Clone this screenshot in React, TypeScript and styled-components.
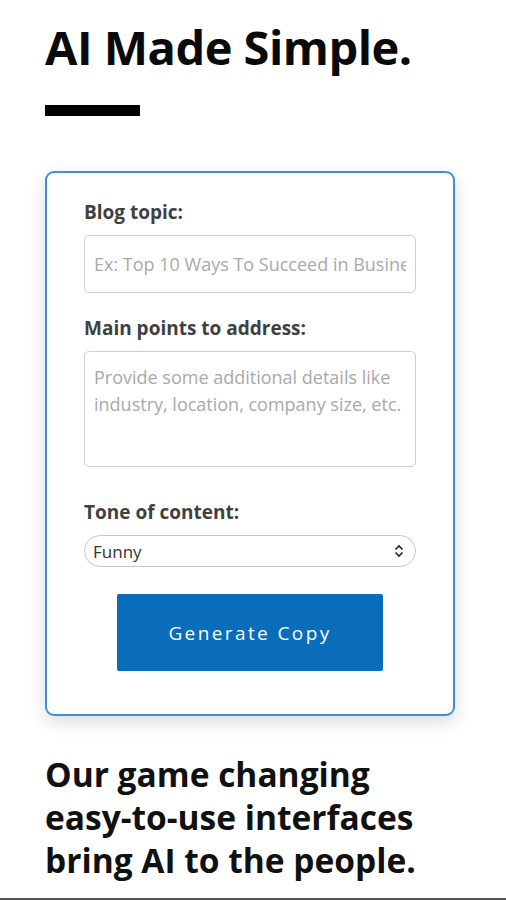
import React from "react";
import styled, { createGlobalStyle } from "styled-components";

const Global = createGlobalStyle`
  html, body {
    margin: 0;
    padding: 0;
    background: #fff;
  }
  body {
    font-family: "Open Sans", "Liberation Sans", sans-serif;
    color: #111;
  }
  * { box-sizing: border-box; }
`;

export default function App() {
  return (
    <>
      <Global />
      <Page>
        <Heading>AI Made Simple.</Heading>
        <Rule />
        <Card>
          <Field $after={22}>
            <Label>Blog topic:</Label>
            <TextInput
              type="text"
              placeholder="Ex: Top 10 Ways To Succeed in Business"
            />
          </Field>
          <Field $after={32}>
            <Label>Main points to address:</Label>
            <TextArea placeholder="Provide some additional details like industry, location, company size, etc." />
          </Field>
          <Field $after={27}>
            <Label>Tone of content:</Label>
            <SelectWrap>
              <Select defaultValue="Funny">
                <option>Funny</option>
                <option>Professional</option>
                <option>Casual</option>
              </Select>
              <Arrows viewBox="0 0 10 14" aria-hidden>
                <path d="M1.5 5.5 L5 2 L8.5 5.5" />
                <path d="M1.5 8.5 L5 12 L8.5 8.5" />
              </Arrows>
            </SelectWrap>
          </Field>
          <ButtonRow>
            <Button type="button">Generate Copy</Button>
          </ButtonRow>
        </Card>
        <Tagline>
          Our game changing
          <br />
          easy-to-use interfaces
          <br />
          bring AI to the people.
        </Tagline>
      </Page>
      <BottomLine />
    </>
  );
}

const Page = styled.div`
  padding: 19px 51px 0 45px;
  height: 898px;
  overflow: hidden;
`;

const Heading = styled.h1`
  margin: 0;
  font-family: "Open Sans", sans-serif;
  font-weight: 700;
  font-size: 47px;
  line-height: 56px;
  letter-spacing: -0.5px;
  color: #0a0a0a;
`;

const Rule = styled.div`
  width: 95px;
  height: 11px;
  background: #000;
  margin: 30px 0 55px;
`;

const Card = styled.div`
  width: 410px;
  border: 2px solid #3b90db;
  border-radius: 9px;
  background: #fff;
  box-shadow: 0 6px 18px rgba(0, 0, 0, 0.14);
  padding: 26px 37px 43px;
  display: flex;
  flex-direction: column;
`;

const Field = styled.div<{ $after: number }>`
  display: flex;
  flex-direction: column;
  gap: 10px;
  margin-bottom: ${(p) => p.$after}px;
`;

const Label = styled.label`
  font-family: "Open Sans", sans-serif;
  font-weight: 700;
  font-size: 19px;
  line-height: 26px;
  color: #404040;
`;

const inputBase = `
  width: 100%;
  border: 1px solid #cfcfcf;
  border-radius: 5px;
  background: #fff;
  font-family: "Open Sans", sans-serif;
  font-size: 18px;
  color: #333;
  outline: none;
  &::placeholder { color: #a9a9a9; }
`;

const TextInput = styled.input`
  ${inputBase}
  height: 58px;
  padding: 0 9px;
`;

const TextArea = styled.textarea`
  ${inputBase}
  height: 116px;
  padding: 12px 9px;
  line-height: 27px;
  resize: none;
`;

const SelectWrap = styled.div`
  position: relative;
`;

const Select = styled.select`
  width: 100%;
  height: 32px;
  appearance: none;
  border: 1px solid #c8c8c8;
  border-radius: 16px;
  background: #fff;
  padding: 0 8px;
  font-family: "Open Sans", sans-serif;
  font-size: 17px;
  color: #333;
  outline: none;
`;

const Arrows = styled.svg`
  position: absolute;
  right: 12px;
  top: 9px;
  width: 10px;
  height: 14px;
  fill: none;
  stroke: #222;
  stroke-width: 1.6;
  pointer-events: none;
`;

const ButtonRow = styled.div`
  display: flex;
  justify-content: center;
`;

const Button = styled.button`
  width: 266px;
  height: 77px;
  border: none;
  border-radius: 2px;
  background: #0a6dbc;
  color: #fff;
  font-family: "Open Sans", sans-serif;
  font-size: 19px;
  letter-spacing: 2.4px;
  cursor: pointer;
`;

const Tagline = styled.p`
  margin: 37px 0 0;
  font-family: "Open Sans", sans-serif;
  font-weight: 700;
  font-size: 33.5px;
  line-height: 43px;
  color: #111;
`;

const BottomLine = styled.div`
  height: 2px;
  background: #555;
`;
